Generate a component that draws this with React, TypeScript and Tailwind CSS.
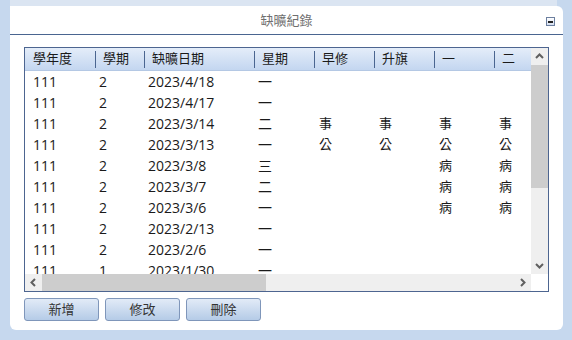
import React from "react";

const FONT = { fontFamily: '"Open Sans", "Noto Sans CJK TC", sans-serif' };

const cols = [70, 49, 110, 60, 60, 60, 60, 60];
const headers = ["學年度", "學期", "缺曠日期", "星期", "早修", "升旗", "一", "二"];

const rows: string[][] = [
  ["111", "2", "2023/4/18", "一", "", "", "", ""],
  ["111", "2", "2023/4/17", "一", "", "", "", ""],
  ["111", "2", "2023/3/14", "二", "事", "事", "事", "事"],
  ["111", "2", "2023/3/13", "一", "公", "公", "公", "公"],
  ["111", "2", "2023/3/8", "三", "", "", "病", "病"],
  ["111", "2", "2023/3/7", "二", "", "", "病", "病"],
  ["111", "2", "2023/3/6", "一", "", "", "病", "病"],
  ["111", "2", "2023/2/13", "一", "", "", "", ""],
  ["111", "2", "2023/2/6", "一", "", "", "", ""],
  ["111", "1", "2023/1/30", "一", "", "", "", ""],
];

function Chevron({ dir }: { dir: "up" | "down" | "left" | "right" }) {
  const pts: Record<string, string> = {
    up: "1,6 4.5,2.5 8,6",
    down: "1,3 4.5,6.5 8,3",
    left: "6,1 2.5,4.5 6,8",
    right: "3,1 6.5,4.5 3,8",
  };
  return (
    <svg width="9" height="9" viewBox="0 0 9 9">
      <polyline points={pts[dir]} fill="none" stroke="#606060" strokeWidth="2" />
    </svg>
  );
}

function Btn({ label }: { label: string }) {
  return (
    <div className="w-[75px] h-[23px] flex items-center justify-center rounded-[3px] border border-[#7f96ba] bg-gradient-to-b from-[#e2ebf7] to-[#b5cbe7] text-[13px] text-[#333]">
      {label}
    </div>
  );
}

export default function App() {
  return (
    <div className="w-[572px] h-[340px] bg-[#c6d8ee] pl-[10px] pr-[9px] pb-[10px] flex flex-col overflow-hidden" style={FONT}>
      <div className="h-[6px] bg-[#dbe5f2] mr-[6px]" />
      <div className="flex-1 bg-white rounded-b-[6px] rounded-tr-[6px] flex flex-col">
        <div className="h-[28px] relative flex items-center justify-center text-[13px] text-[#6f6f6f]">
          <span className="mt-[1px]">缺曠紀錄</span>
          <div className="absolute right-[8px] top-[11px] w-[9px] h-[9px] border border-[#6c7f9f] bg-gradient-to-b from-[#ffffff] to-[#d5def0] flex items-center justify-center">
            <div className="w-[5px] h-[2px] bg-[#222]" />
          </div>
        </div>
        <div className="h-[1px] bg-[#4a6590]" />
        <div className="pl-[14px] pt-[12px] flex flex-col">
          <div className="w-[525px] h-[245px] border border-[#4d6590] flex">
            <div className="w-[506px] flex flex-col">
              <div className="h-[226px] overflow-hidden">
                <div className="flex h-[23px] bg-gradient-to-b from-[#e4edf9] to-[#c3d6f0] border-b border-[#b4c8e4] w-max">
                  {headers.map((h, i) => (
                    <div key={i} className="flex items-center h-full text-[13px] text-[#1a1a1a]" style={{ width: cols[i] }}>
                      {i > 0 ? <div className="w-[1px] h-[17px] bg-[#4a6590]" /> : <div className="w-[1px]" />}
                      <span className="pl-[7px]">{h}</span>
                    </div>
                  ))}
                </div>
                {rows.map((r, ri) => (
                  <div key={ri} className="flex h-[21px] items-center text-[14px] text-[#1a1a1a] w-max">
                    {r.map((c, ci) => (
                      <div
                        key={ci}
                        className={ci === 0 ? "pl-[8px]" : ci >= 4 ? "pl-[5px] text-[13px]" : "pl-[4px]"}
                        style={{ width: cols[ci] }}
                      >
                        {c}
                      </div>
                    ))}
                  </div>
                ))}
              </div>
              <div className="h-[17px] bg-[#efefef] flex items-center">
                <div className="w-[17px] h-full flex items-center justify-center"><Chevron dir="left" /></div>
                <div className="w-[224px] h-full bg-[#cdcdcd]" />
                <div className="flex-1" />
                <div className="w-[17px] h-full flex items-center justify-center"><Chevron dir="right" /></div>
              </div>
            </div>
            <div className="w-[17px] flex flex-col">
              <div className="h-[226px] bg-[#efefef] flex flex-col">
                <div className="h-[17px] flex items-center justify-center"><Chevron dir="up" /></div>
                <div className="h-[123px] bg-[#cdcdcd]" />
                <div className="flex-1" />
                <div className="h-[17px] flex items-center justify-center"><Chevron dir="down" /></div>
              </div>
              <div className="flex-1 bg-white" />
            </div>
          </div>
          <div className="flex gap-[6px] mt-[6px]">
            <Btn label="新增" />
            <Btn label="修改" />
            <Btn label="刪除" />
          </div>
        </div>
      </div>
    </div>
  );
}
